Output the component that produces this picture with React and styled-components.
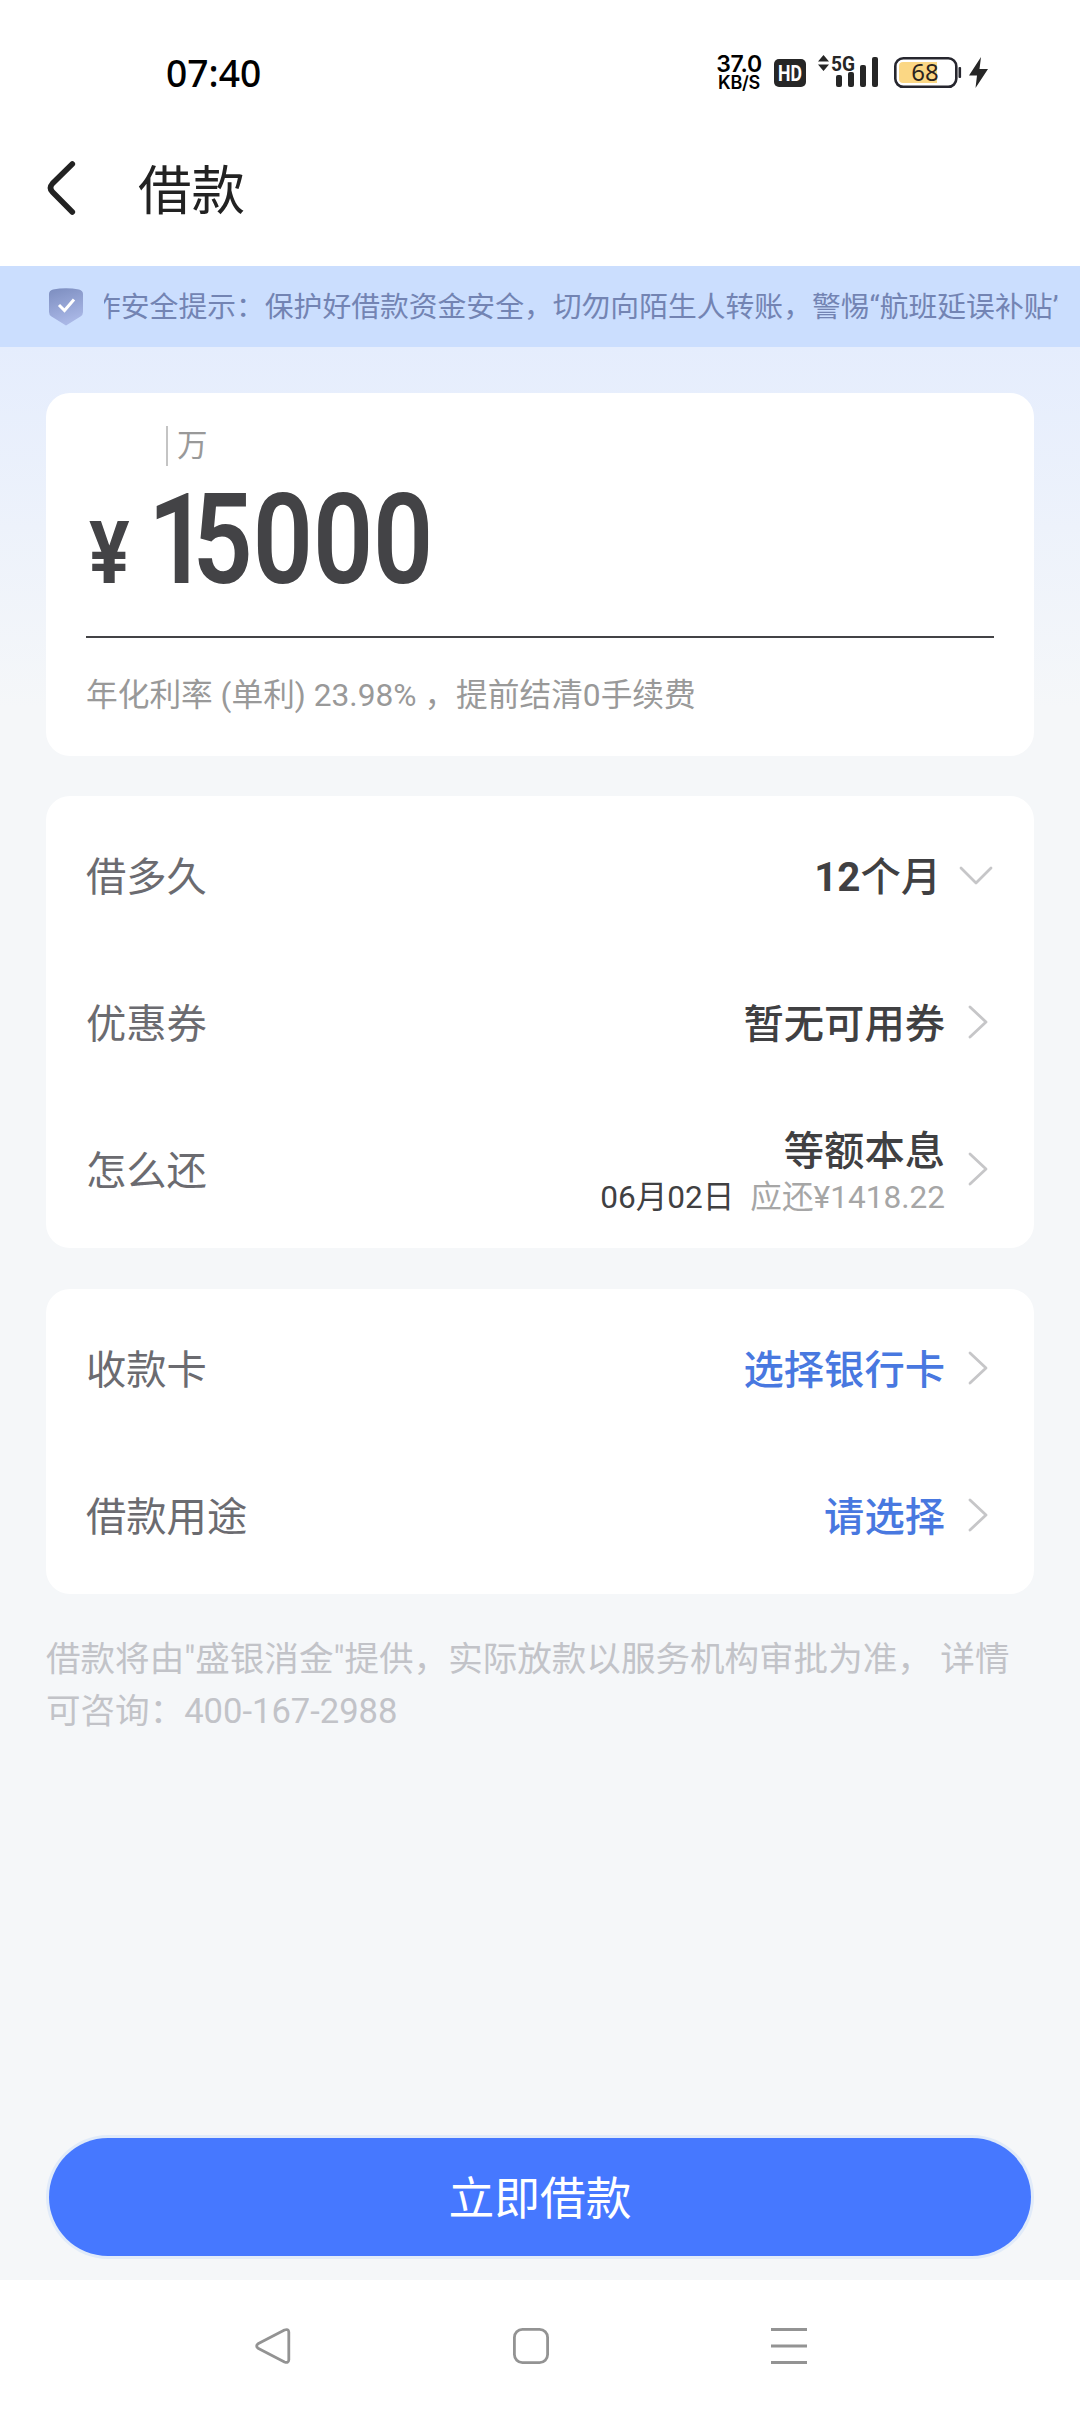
import React from 'react';
import styled, { createGlobalStyle } from 'styled-components';

const GlobalStyle = createGlobalStyle`
	* {
		box-sizing: border-box;
	}

	body {
		margin: 0;
		background: #fff;
		font-family: Roboto, "Noto Sans CJK SC", sans-serif;
	}

	svg {
		display: block;
		flex: none;
	}
`;

const Page = styled.div`
	display: flex;
	flex-direction: column;
	width: 1080px;
	height: 2412px;
	overflow: hidden;
	white-space: nowrap;
`;

const StatusBar = styled.div`
	display: flex;
	align-items: center;
	justify-content: space-between;
	height: 114px;
	padding: 32px 88px 0 166px;
	color: #000;
`;

const Time = styled.div`
	font: 500 37.2px/40px "Noto Sans", sans-serif;
`;

const StatusIcons = styled.div`
	display: flex;
	align-items: center;
`;

const Speed = styled.div`
	display: flex;
	flex-direction: column;
	align-items: center;
	width: 48px;
	margin-right: 7px;
	font-family: Inter, sans-serif;
	font-weight: 600;
`;

const SpeedValue = styled.span`
	font-size: 23px;
	line-height: 18px;
	letter-spacing: -0.3px;
`;

const SpeedUnit = styled.span`
	font-size: 18px;
	line-height: 19px;
	letter-spacing: -0.3px;
`;

const Header = styled.div`
	display: flex;
	align-items: center;
	height: 152px;
	padding-left: 46px;
	color: #222;
`;

const BackIcon = styled.svg`
	width: 30px;
	height: 56px;
	margin-bottom: 4px;
	fill: none;
	stroke: #222;
	stroke-width: 5.6;
	stroke-linecap: round;
`;

const Title = styled.h1`
	margin: 0 0 0 62px;
	padding-top: 3px;
	font-size: 53.5px;
	font-weight: 400;
	line-height: 60px;
`;

const Notice = styled.div`
	display: flex;
	align-items: center;
	height: 81px;
	padding: 0 22px 0 49px;
	background: #cbdefe;
`;

const NoticeClip = styled.div`
	flex: 1;
	margin-left: 21px;
	overflow: hidden;
`;

const NoticeText = styled.div`
	margin-left: -12px;
	color: #7384b3;
	font-size: 28.8px;
	line-height: 40px;
`;

const Content = styled.div`
	display: flex;
	flex-direction: column;
	flex: 1;
	padding: 46px 46px 24px;
	background: linear-gradient(#e5edfd, #f5f7f9 360px);
`;

const Card = styled.div`
	padding: ${props => props.$pad || '7px 40px 4px'};
	margin-bottom: ${props => props.$gap || '41px'};
	border-radius: 24px;
	background: #fff;
`;

const Unit = styled.div`
	display: flex;
	align-items: center;
	width: max-content;
	height: 40px;
	margin-left: 80px;
	padding-left: 9px;
	border-left: 2px solid #c4c4c4;
	color: #999;
	font-size: 30.5px;
	line-height: 40px;
`;

const Amount = styled.div`
	display: flex;
	align-items: baseline;
	height: 172px;
	border-bottom: 2px solid #434346;
	color: #434346;
`;

const Currency = styled.span`
	width: 59px;
	margin-left: 3px;
	font-size: 88px;
	font-weight: 700;
	line-height: 148px;
	transform: scaleX(0.86);
	transform-origin: left;
`;

const Digits = styled.span`
	font-size: 127px;
	font-weight: 600;
	line-height: 148px;
	transform: scaleX(0.83);
	transform-origin: left;
`;

/* the leading 1 sits closer to its neighbour than a tabular digit */
const LeadDigit = styled.span`
	letter-spacing: -19px;
`;

const Rate = styled.div`
	margin-top: 35px;
	color: #999;
	font-size: 31.7px;
	line-height: 46px;
`;

const Row = styled.div`
	display: flex;
	align-items: center;
	height: 147px;
`;

const Label = styled.div`
	flex: 1;
	padding-top: 3px;
	color: #6b6b70;
	font-size: 40.3px;
	line-height: 48px;
`;

const Value = styled.div`
	padding-top: ${props => (props.$tall ? '8px' : '3px')};
	color: ${props => (props.$link ? '#4878e0' : '#404042')};
	font-size: 40.3px;
	font-weight: 500;
	line-height: 46px;
	text-align: right;

	b {
		font-weight: 700;
	}
`;

const Plan = styled.div`
	display: flex;
	align-items: baseline;
	justify-content: flex-end;
	gap: 16px;
	color: #a6a6a6;
	font-size: 31.6px;
	font-weight: 400;
`;

const PlanDate = styled.span`
	color: #404042;
`;

const Arrow = styled.svg`
	width: 34px;
	height: 34px;
	margin-left: ${props => (props.$down ? '18px' : '15px')};
	margin-right: ${props => (props.$down ? '1px' : '0')};
	margin-bottom: 4px;
	fill: none;
	stroke: #c6c6c8;
	stroke-width: 2.8;
	stroke-linecap: round;
	stroke-linejoin: round;
`;

const Note = styled.p`
	margin: 0;
	color: #c2c3c8;
	font-size: 34.56px;
	line-height: 52px;
`;

const Submit = styled.button`
	width: 982px;
	height: 118px;
	margin: auto auto 0;
	padding: 5px 0 0;
	border: 0;
	border-radius: 59px;
	background: #4678ff;
	box-shadow: 0 0 0 3px #e1ebf9;
	color: #fff;
	font-family: inherit;
	font-size: 45.8px;
	line-height: 60px;
`;

const NavBar = styled.div`
	display: flex;
	align-items: center;
	justify-content: center;
	gap: 222px;
	height: 132px;
	padding-right: 18px;
	background: #fff;
`;

const NavIcon = styled.svg`
	width: 36px;
	height: 36px;
	fill: none;
	stroke: #939393;
	stroke-width: 2.8;
	stroke-linejoin: round;
`;

const terms = [
	{ label: '借多久', value: <><b>12</b>个月</>, down: true },
	{ label: '优惠券', value: '暂无可用券' },
	{ label: '怎么还', value: '等额本息', date: '06月02日', due: '应还¥1418.22' },
];

const account = [
	{ label: '收款卡', value: '选择银行卡', link: true },
	{ label: '借款用途', value: '请选择', link: true },
];

const Item = ({ item }) => (
	<Row>
		<Label>{item.label}</Label>
		<Value $link={item.link} $tall={!!item.date}>
			{item.value}
			{item.date &&
				<Plan>
					<PlanDate>{item.date}</PlanDate>
					<span>{item.due}</span>
				</Plan>}
		</Value>
		<Arrow viewBox="0 0 34 34" $down={item.down}>
			<path d={item.down ? 'M2 10L17 25L32 10' : 'M10 2L26 17L10 32'} />
		</Arrow>
	</Row>
);

const Signal = () => (
	<svg width="222" height="48" viewBox="770 49 222 48">
		<rect x="774" y="59" width="32" height="28" rx="5" fill="#262626" />
		<text x="790" y="81" textAnchor="middle" textLength="24" lengthAdjust="spacingAndGlyphs" fill="#fff" fontFamily="Roboto" fontWeight="700" fontSize="22">HD</text>
		<path d="M818 61.5L823.5 55L829 61.5ZM818 64.5L823.5 71L829 64.5Z" fill="#262626" />
		<text x="831" y="71" textLength="24" lengthAdjust="spacingAndGlyphs" fill="#262626" fontFamily="Roboto" fontWeight="700" fontSize="21">5G</text>
		<g fill="#262626">
			<rect x="836" y="75" width="6" height="12" rx="2" />
			<rect x="848" y="72" width="6" height="15" rx="2" />
			<rect x="860" y="65" width="6" height="22" rx="2" />
			<rect x="872" y="57" width="6" height="30" rx="2" />
		</g>
		<rect x="895.3" y="58.3" width="61" height="28.5" rx="8" fill="#fff" stroke="#26262e" strokeWidth="2.6" />
		<path d="M937 62H903a4 4 0 0 0-4 4v13a4 4 0 0 0 4 4h34z" fill="#fbd784" />
		<rect x="958.5" y="67" width="2.6" height="11" rx="1" fill="#26262e" />
		<text x="925" y="81" textAnchor="middle" fill="#2b2420" fontFamily="Noto Sans" fontWeight="400" fontSize="24">68</text>
		<path d="M981 57L969 75.5H977L975.5 88L988 69H979.5Z" fill="#262626" />
	</svg>
);

const App = () => (
	<Page>
		<GlobalStyle />
		<StatusBar>
			<Time>07:40</Time>
			<StatusIcons>
				<Speed>
					<SpeedValue>37.0</SpeedValue>
					<SpeedUnit>KB/S</SpeedUnit>
				</Speed>
				<Signal />
			</StatusIcons>
		</StatusBar>

		<Header>
			<BackIcon viewBox="0 0 30 56">
				<path d="M26.3 4L6.5 23.5Q2.5 28 6.5 32L26.3 52" />
			</BackIcon>
			<Title>借款</Title>
		</Header>

		<Notice>
			<svg width="34" height="38" viewBox="0 0 34 38">
				<defs>
					<linearGradient id="shield" x1="0" y1="0" x2="0.3" y2="1">
						<stop offset="0" stopColor="#7c8dbf" />
						<stop offset="1" stopColor="#a9b7e6" />
					</linearGradient>
				</defs>
				<path d="M4 1.5Q17-1 30 1.5Q34 2.5 34 6V24Q34 27 31.5 28.5L17 37.5L2.5 28.5Q0 27 0 24V6Q0 2.5 4 1.5Z" fill="url(#shield)" />
				<path d="M10 17L15.5 22.5L25 11.5" fill="none" stroke="#fff" strokeWidth="3" />
			</svg>
			<NoticeClip>
				<NoticeText>作安全提示：保护好借款资金安全，切勿向陌生人转账，警惕“航班延误补贴”</NoticeText>
			</NoticeClip>
		</Notice>

		<Content>
			<Card $pad="33px 40px 37px" $gap="40px">
				<Unit>万</Unit>
				<Amount>
					<Currency>¥</Currency>
					<Digits><LeadDigit>1</LeadDigit>5000</Digits>
				</Amount>
				<Rate>年化利率 (单利) 23.98% ，提前结清0手续费</Rate>
			</Card>
			<Card>
				{terms.map(item => <Item key={item.label} item={item} />)}
			</Card>
			<Card $gap="39px">
				{account.map(item => <Item key={item.label} item={item} />)}
			</Card>
			<Note>
				借款将由"盛银消金"提供，实际放款以服务机构审批为准， 详情
				<br />
				可咨询：400-167-2988
			</Note>
			<Submit>立即借款</Submit>
		</Content>

		<NavBar>
			<NavIcon viewBox="0 0 36 36">
				<path d="M3 15.8L29.5 2Q33.5 0.5 33.8 4V32Q33.5 35.5 29.5 34L3 20.2Q0.3 18 3 15.8Z" />
			</NavIcon>
			<NavIcon viewBox="0 0 36 36">
				<rect x="1.4" y="1.4" width="33.2" height="33.2" rx="8" />
			</NavIcon>
			<NavIcon viewBox="0 0 36 36">
				<path d="M0 1.5H36M0 18H36M0 34.5H36" />
			</NavIcon>
		</NavBar>
	</Page>
);

export default App;
